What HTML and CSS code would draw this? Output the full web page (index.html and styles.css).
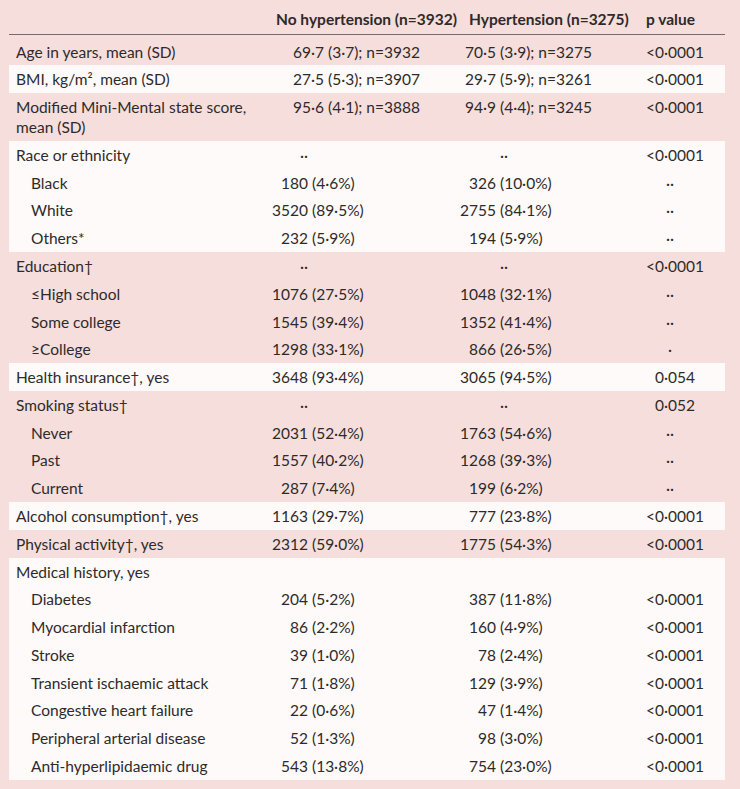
FILE: index.html
```html
<!DOCTYPE html>
<html lang="en">
<head>
<meta charset="utf-8">
<title>Baseline characteristics</title>
<link rel="stylesheet" href="styles.css">
</head>
<body>
<div class="table">
  <div class="row head">
    <div class="lbl"></div>
    <div class="h1">No hypertension (n=3932)</div>
    <div class="h2">Hypertension (n=3275)</div>
    <div class="hp">p value</div>
  </div>

  <div class="row first">
    <div class="lbl">Age in years, mean (SD)</div>
    <div class="c1 m"><span class="a">69·7</span><span class="b">(3·7); n=3932</span></div>
    <div class="c2"><span class="a">70·5</span><span class="b">(3·9); n=3275</span></div>
    <div class="p">&lt;0·0001</div>
  </div>
  <div class="row w">
    <div class="lbl">BMI, kg/m², mean (SD)</div>
    <div class="c1 m"><span class="a">27·5</span><span class="b">(5·3); n=3907</span></div>
    <div class="c2"><span class="a">29·7</span><span class="b">(5·9); n=3261</span></div>
    <div class="p">&lt;0·0001</div>
  </div>
  <div class="row">
    <div class="lbl">Modified Mini-Mental state score, mean (SD)</div>
    <div class="c1 m"><span class="a">95·6</span><span class="b">(4·1); n=3888</span></div>
    <div class="c2"><span class="a">94·9</span><span class="b">(4·4); n=3245</span></div>
    <div class="p">&lt;0·0001</div>
  </div>

  <div class="row w">
    <div class="lbl">Race or ethnicity</div>
    <div class="c1"><span class="a">··</span><span class="b"></span></div>
    <div class="c2"><span class="a"></span><span class="b">··</span></div>
    <div class="p">&lt;0·0001</div>
  </div>
  <div class="row w">
    <div class="lbl sub">Black</div>
    <div class="c1"><span class="a">180</span><span class="b">(4·6%)</span></div>
    <div class="c2"><span class="a">326</span><span class="b">(10·0%)</span></div>
    <div class="p na">··</div>
  </div>
  <div class="row w">
    <div class="lbl sub">White</div>
    <div class="c1"><span class="a">3520</span><span class="b">(89·5%)</span></div>
    <div class="c2"><span class="a">2755</span><span class="b">(84·1%)</span></div>
    <div class="p na">··</div>
  </div>
  <div class="row w">
    <div class="lbl sub">Others*</div>
    <div class="c1"><span class="a">232</span><span class="b">(5·9%)</span></div>
    <div class="c2"><span class="a">194</span><span class="b">(5·9%)</span></div>
    <div class="p na">··</div>
  </div>

  <div class="row">
    <div class="lbl">Education†</div>
    <div class="c1"><span class="a">··</span><span class="b"></span></div>
    <div class="c2"><span class="a"></span><span class="b">··</span></div>
    <div class="p">&lt;0·0001</div>
  </div>
  <div class="row">
    <div class="lbl sub">≤High school</div>
    <div class="c1"><span class="a">1076</span><span class="b">(27·5%)</span></div>
    <div class="c2"><span class="a">1048</span><span class="b">(32·1%)</span></div>
    <div class="p na">··</div>
  </div>
  <div class="row">
    <div class="lbl sub">Some college</div>
    <div class="c1"><span class="a">1545</span><span class="b">(39·4%)</span></div>
    <div class="c2"><span class="a">1352</span><span class="b">(41·4%)</span></div>
    <div class="p na">··</div>
  </div>
  <div class="row">
    <div class="lbl sub">≥College</div>
    <div class="c1"><span class="a">1298</span><span class="b">(33·1%)</span></div>
    <div class="c2"><span class="a">866</span><span class="b">(26·5%)</span></div>
    <div class="p na">·</div>
  </div>

  <div class="row w">
    <div class="lbl">Health insurance†, yes</div>
    <div class="c1"><span class="a">3648</span><span class="b">(93·4%)</span></div>
    <div class="c2"><span class="a">3065</span><span class="b">(94·5%)</span></div>
    <div class="p">0·054</div>
  </div>

  <div class="row">
    <div class="lbl">Smoking status†</div>
    <div class="c1"><span class="a">··</span><span class="b"></span></div>
    <div class="c2"><span class="a"></span><span class="b">··</span></div>
    <div class="p">0·052</div>
  </div>
  <div class="row">
    <div class="lbl sub">Never</div>
    <div class="c1"><span class="a">2031</span><span class="b">(52·4%)</span></div>
    <div class="c2"><span class="a">1763</span><span class="b">(54·6%)</span></div>
    <div class="p na">··</div>
  </div>
  <div class="row">
    <div class="lbl sub">Past</div>
    <div class="c1"><span class="a">1557</span><span class="b">(40·2%)</span></div>
    <div class="c2"><span class="a">1268</span><span class="b">(39·3%)</span></div>
    <div class="p na">··</div>
  </div>
  <div class="row">
    <div class="lbl sub">Current</div>
    <div class="c1"><span class="a">287</span><span class="b">(7·4%)</span></div>
    <div class="c2"><span class="a">199</span><span class="b">(6·2%)</span></div>
    <div class="p na">··</div>
  </div>

  <div class="row w">
    <div class="lbl">Alcohol consumption†, yes</div>
    <div class="c1"><span class="a">1163</span><span class="b">(29·7%)</span></div>
    <div class="c2"><span class="a">777</span><span class="b">(23·8%)</span></div>
    <div class="p">&lt;0·0001</div>
  </div>
  <div class="row">
    <div class="lbl">Physical activity†, yes</div>
    <div class="c1"><span class="a">2312</span><span class="b">(59·0%)</span></div>
    <div class="c2"><span class="a">1775</span><span class="b">(54·3%)</span></div>
    <div class="p">&lt;0·0001</div>
  </div>

  <div class="row w">
    <div class="lbl">Medical history, yes</div>
    <div class="c1"></div>
    <div class="c2"></div>
    <div class="p"></div>
  </div>
  <div class="row w">
    <div class="lbl sub">Diabetes</div>
    <div class="c1"><span class="a">204</span><span class="b">(5·2%)</span></div>
    <div class="c2"><span class="a">387</span><span class="b">(11·8%)</span></div>
    <div class="p">&lt;0·0001</div>
  </div>
  <div class="row w">
    <div class="lbl sub">Myocardial infarction</div>
    <div class="c1"><span class="a">86</span><span class="b">(2·2%)</span></div>
    <div class="c2"><span class="a">160</span><span class="b">(4·9%)</span></div>
    <div class="p">&lt;0·0001</div>
  </div>
  <div class="row w">
    <div class="lbl sub">Stroke</div>
    <div class="c1"><span class="a">39</span><span class="b">(1·0%)</span></div>
    <div class="c2"><span class="a">78</span><span class="b">(2·4%)</span></div>
    <div class="p">&lt;0·0001</div>
  </div>
  <div class="row w">
    <div class="lbl sub">Transient ischaemic attack</div>
    <div class="c1"><span class="a">71</span><span class="b">(1·8%)</span></div>
    <div class="c2"><span class="a">129</span><span class="b">(3·9%)</span></div>
    <div class="p">&lt;0·0001</div>
  </div>
  <div class="row w">
    <div class="lbl sub">Congestive heart failure</div>
    <div class="c1"><span class="a">22</span><span class="b">(0·6%)</span></div>
    <div class="c2"><span class="a">47</span><span class="b">(1·4%)</span></div>
    <div class="p">&lt;0·0001</div>
  </div>
  <div class="row w">
    <div class="lbl sub">Peripheral arterial disease</div>
    <div class="c1"><span class="a">52</span><span class="b">(1·3%)</span></div>
    <div class="c2"><span class="a">98</span><span class="b">(3·0%)</span></div>
    <div class="p">&lt;0·0001</div>
  </div>
  <div class="row w">
    <div class="lbl sub">Anti-hyperlipidaemic drug</div>
    <div class="c1"><span class="a">543</span><span class="b">(13·8%)</span></div>
    <div class="c2"><span class="a">754</span><span class="b">(23·0%)</span></div>
    <div class="p">&lt;0·0001</div>
  </div>
</div>
</body>
</html>
```

FILE: styles.css
```css
html, body {
  margin: 0;
  padding: 0;
}
body {
  background: #f5dedc;
  font-family: Lato, "Open Sans", sans-serif;
  font-size: 15.5px;
  color: #2f2a2a;
}
.table {
  margin-left: 9px;
  width: 716px;
}
.row {
  display: grid;
  grid-template-columns: 261px 190px 180px 85px;
  line-height: 20px;
  padding: 3.9px 0;
}
.row.w {
  background: #fdfaf9;
}
.head {
  font-weight: 700;
  padding: 9px 0 5px;
  border-bottom: 1.5px solid #776a6a;
  line-height: 20px;
}
.head .h1 { padding-left: 6px; }
.head .h2 { padding-left: 9px; }
.head .hp { padding-left: 6px; }
.row.first {
  padding-top: 6.5px;
}
.lbl {
  padding-left: 7px;
  padding-right: 14px;
}
.lbl.sub {
  padding-left: 22px;
}
.c1, .c2 {
  display: flex;
  white-space: nowrap;
}
.a {
  text-align: right;
  flex: none;
}
.b {
  padding-left: 4px;
}
.c1 .a { width: 38px; }
.c1.m .a { width: 54px; }
.c2 .a { width: 36px; }
.p {
  text-align: center;
  padding-right: 15px;
}
.p.na {
  padding-right: 25px;
}
```
